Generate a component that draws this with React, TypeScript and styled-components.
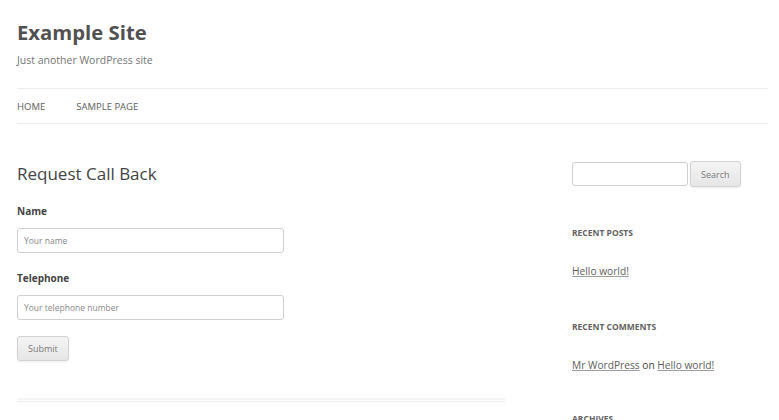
import React from "react";
import styled, { createGlobalStyle } from "styled-components";

const Global = createGlobalStyle`
  html, body { margin: 0; padding: 0; background: #fff; }
  body { font-family: "Open Sans", "Liberation Sans", sans-serif; color: #444; }
  * { box-sizing: border-box; }
`;

const Page = styled.div`
  padding: 0 11px 0 17px;
`;

const Header = styled.header`
  padding-top: 17px;
`;

const SiteTitle = styled.h1`
  margin: 0;
  font-size: 20.3px;
  line-height: 30px;
  font-weight: 700;
  color: #515151;
`;

const Tagline = styled.p`
  margin: 6px 0 0;
  font-size: 10.5px;
  line-height: 14px;
  color: #757575;
`;

const Nav = styled.nav`
  margin-top: 21px;
  border-top: 1px solid #ededed;
  border-bottom: 1px solid #ededed;
  height: 36px;
  display: flex;
  align-items: center;
  gap: 31px;
`;

const NavItem = styled.a`
  font-size: 9.5px;
  color: #5e5e5e;
  text-transform: uppercase;
  text-decoration: none;
`;

const Body = styled.div`
  display: flex;
  justify-content: space-between;
  padding-top: 37px;
`;

const Main = styled.main`
  width: 488px;
`;

const PageTitle = styled.h2`
  margin: 0;
  font-size: 17px;
  line-height: 26px;
  font-weight: 400;
  color: #444;
`;

const Label = styled.label<{ first?: boolean }>`
  display: block;
  margin-top: ${(p) => (p.first ? "16px" : "17px")};
  font-size: 10px;
  line-height: 16px;
  font-weight: 700;
  color: #444;
`;

const Input = styled.input`
  display: block;
  margin-top: 9px;
  width: 267px;
  height: 25px;
  padding: 0 6px;
  border: 1px solid #cfcfcf;
  border-radius: 3px;
  font-family: "Open Sans", "Liberation Sans", sans-serif;
  font-size: 8.5px;
  color: #555;
  &::placeholder { color: #8a8a8a; }
`;

const Button = styled.button<{ top?: string; h?: number }>`
  display: block;
  height: ${(p) => p.h || 25}px;
  padding: 0 10px;
  margin-top: ${(p) => p.top || "0"};
  border: 1px solid #d2d2d2;
  border-radius: 3px;
  background: linear-gradient(#f4f4f4, #e6e6e6);
  box-shadow: 0 1px 2px rgba(64, 64, 64, 0.1);
  font-family: "Open Sans", "Liberation Sans", sans-serif;
  font-size: 9px;
  color: #7c7c7c;
`;

const Divider = styled.div`
  margin-top: 37px;
  height: 4px;
  border-top: 2px solid #f5f5f5;
  border-bottom: 1px solid #ededed;
`;

const Sidebar = styled.aside`
  width: 196px;
`;

const SearchRow = styled.div`
  display: flex;
  align-items: center;
  gap: 2px;
`;

const SearchInput = styled.input`
  width: 116px;
  height: 24px;
  border: 1px solid #cfcfcf;
  border-radius: 3px;
  padding: 0 5px;
`;

const WidgetTitle = styled.h3<{ top: string }>`
  margin: ${(p) => p.top} 0 0;
  font-size: 8.5px;
  line-height: 12px;
  font-weight: 700;
  text-transform: uppercase;
  color: #636363;
`;

const WidgetText = styled.p`
  margin: 25px 0 0;
  font-size: 10.2px;
  line-height: 14px;
  color: #444;
`;

const Link = styled.a`
  color: #5e5e5e;
  text-decoration: underline;
  text-decoration-color: #9f9f9f;
`;

export default function App() {
  return (
    <>
      <Global />
      <Page>
        <Header>
          <SiteTitle>Example Site</SiteTitle>
          <Tagline>Just another WordPress site</Tagline>
          <Nav>
            <NavItem>Home</NavItem>
            <NavItem>Sample Page</NavItem>
          </Nav>
        </Header>
        <Body>
          <Main>
            <PageTitle>Request Call Back</PageTitle>
            <Label first>Name</Label>
            <Input placeholder="Your name" />
            <Label>Telephone</Label>
            <Input placeholder="Your telephone number" />
            <Button top="16px">Submit</Button>
            <Divider />
          </Main>
          <Sidebar>
            <SearchRow>
              <SearchInput />
              <Button h={26}>Search</Button>
            </SearchRow>
            <WidgetTitle top="40px">Recent Posts</WidgetTitle>
            <WidgetText>
              <Link>Hello world!</Link>
            </WidgetText>
            <WidgetTitle top="43px">Recent Comments</WidgetTitle>
            <WidgetText>
              <Link>Mr WordPress</Link> on <Link>Hello world!</Link>
            </WidgetText>
            <WidgetTitle top="41px">Archives</WidgetTitle>
          </Sidebar>
        </Body>
      </Page>
    </>
  );
}
